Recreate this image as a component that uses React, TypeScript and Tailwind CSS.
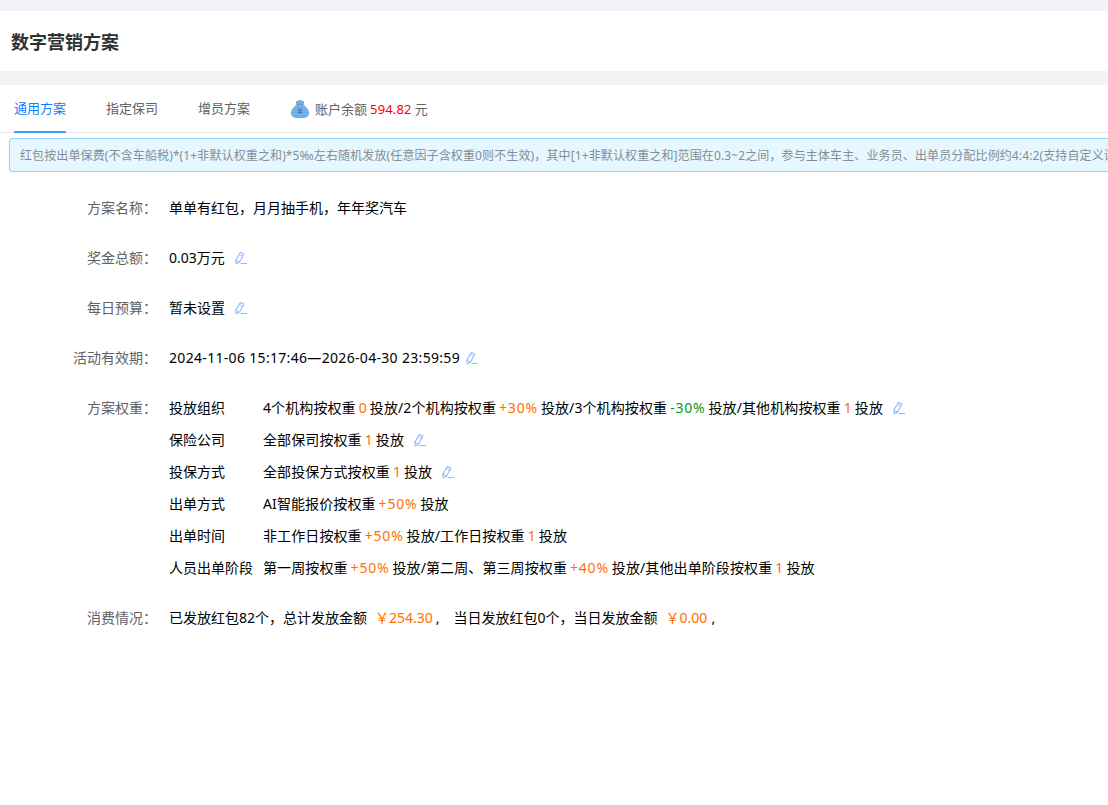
import { ReactNode } from "react";

const tabs = ["通用方案", "指定保司", "增员方案"];

const EditIcon = ({ className = "ml-[9px]" }) => (
  <button className={`${className} inline-flex cursor-pointer`}>
    <svg width="14" height="14" viewBox="0 0 14 14" fill="none" stroke="#8abaff" strokeWidth="1.1" strokeLinejoin="round">
      <path d="M6.300 1.400 9.900 3.100 5.600 10.900 2.200 12.700 1.800 9.200Z" />
      <path d="M5.200 3.400 8.700 5.200M1.900 9.200 5.400 11" strokeWidth=".9" />
      <path d="M6.500 12.500H13" />
    </svg>
  </button>
);

const MoneyBag = () => (
  <svg width="20" height="20" viewBox="0 0 20 20">
    <path
      d="M6.200 2.800c.8-.8 1.800-.3 2.500-.9.900-.5 1.700-.5 2.600 0 .7.600 1.700.1 2.500.900.3.900-.5 1.600-.6 2.600.1 1.300 5.300 3.600 5.300 9 0 3.100-2.500 4.200-8.500 4.200s-8.500-1.100-8.500-4.200c0-5.400 5.200-7.700 5.300-9-.1-1-.9-1.700-.6-2.600Z"
      fill="#6bb3f8"
      stroke="#7d95aa"
      strokeWidth=".9"
    />
    <path d="M6.900 5.500h6.200" stroke="#6391bd" strokeWidth=".8" />
    <path d="m7.800 9 2.200 2 2.200-2M10 11v4M7.400 11.500h5.200M7.400 13.400h5.200" fill="none" stroke="#56718b" strokeWidth=".9" />
  </svg>
);

const Weight = ({ children, color = "text-[#ff6f00]" }: { children: ReactNode; color?: string }) => (
  <span className={`${color} mx-[3px]`}>{children}</span>
);

const Percent = ({ children, color = "text-[#ff6f00]" }: { children: ReactNode; color?: string }) => (
  <span className={`${color} mx-[3px] tracking-[0.8px]`}>{children}</span>
);

const Row = ({ label, children }: { label: string; children: ReactNode }) => (
  <div className="flex leading-8 mb-[18px]">
    <div className="w-[157px] shrink-0 text-right text-[#606266]">{label}：</div>
    <div className="pl-3">{children}</div>
  </div>
);

const WeightRow = ({ name, children }: { name: string; children: ReactNode }) => (
  <div className="flex h-8 items-center whitespace-nowrap">
    <div className="w-[94px] shrink-0">{name}</div>
    <div className="flex items-center tracking-[0.1px]">{children}</div>
  </div>
);

export default function App() {
  return (
    <div className="h-[805px] overflow-hidden bg-white text-sm text-black font-['Noto_Sans','Noto_Sans_CJK_SC',sans-serif]">
      <div className="h-[11px] bg-[#f0f2f5]" />
      <header className="h-[60px] flex items-center pl-[11px] pt-0.5">
        <h1 className="text-lg font-bold text-[#303133]">数字营销方案</h1>
      </header>
      <div className="h-[14px] bg-[#f0f2f5]" />

      <nav className="h-12 flex pl-[14px] gap-10 text-[13px] text-[#606266] border-b border-[#e4e7ed]">
        {tabs.map((tab, i) => (
          <button
            key={tab}
            className={i === 0 ? "h-12 pt-px text-[#1080ff] border-b-2 border-[#409eff]" : "h-12 pt-px border-b-2 border-transparent"}
          >
            {tab}
          </button>
        ))}
        <div className="flex items-center h-12">
          <MoneyBag />
          <span className="ml-[5px]">账户余额</span>
          <span className="mx-[3px] tracking-[0.15px] text-[#ff0000]">594.82</span>
          <span>元</span>
        </div>
      </nav>

      <div className="mt-[5px] ml-[9px] h-[34px] flex items-center pl-[10px] pt-0.5 border border-r-0 border-[#91d5ff] bg-[#e6f7ff] rounded-l text-xs tracking-[0.12px] text-[#858d94] whitespace-nowrap overflow-hidden">
        红包按出单保费(不含车船税)*(1+非默认权重之和)*5‰左右随机发放(任意因子含权重0则不生效)，其中[1+非默认权重之和]范围在0.3~2之间，参与主体车主、业务员、出单员分配比例约4:4:2(支持自定义设
      </div>

      <main className="pt-5">
        <Row label="方案名称">单单有红包，月月抽手机，年年奖汽车</Row>
        <Row label="奖金总额">
          <div className="flex items-center">0.03万元<EditIcon /></div>
        </Row>
        <Row label="每日预算">
          <div className="flex items-center">暂未设置<EditIcon /></div>
        </Row>
        <Row label="活动有效期">
          <div className="flex items-center">
            <span className="tracking-[0.32px]">2024-11-06 15:17:46—2026-04-30 23:59:59</span>
            <EditIcon className="ml-[5px]" />
          </div>
        </Row>
        <Row label="方案权重">
          <WeightRow name="投放组织">
            4个机构按权重<Weight>0</Weight>投放/2个机构按权重<Percent>+30%</Percent>投放/3个机构按权重
            <Percent color="text-[#009925]">-30%</Percent>投放/其他机构按权重<Weight>1</Weight>投放
            <EditIcon />
          </WeightRow>
          <WeightRow name="保险公司">
            全部保司按权重<Weight>1</Weight>投放<EditIcon />
          </WeightRow>
          <WeightRow name="投保方式">
            全部投保方式按权重<Weight>1</Weight>投放<EditIcon />
          </WeightRow>
          <WeightRow name="出单方式">
            AI智能报价按权重<Percent>+50%</Percent>投放
          </WeightRow>
          <WeightRow name="出单时间">
            非工作日按权重<Percent>+50%</Percent>投放/工作日按权重<Weight>1</Weight>投放
          </WeightRow>
          <WeightRow name="人员出单阶段">
            第一周按权重<Percent>+50%</Percent>投放/第二周、第三周按权重<Percent>+40%</Percent>投放/其他出单阶段按权重<Weight>1</Weight>投放
          </WeightRow>
        </Row>
        <Row label="消费情况">
          <div className="flex whitespace-nowrap">
            <span>已发放红包82个，总计发放金额</span>
            <span className="ml-2 mr-[3px] text-[#ff6f00]">￥254.30</span>
            <span>,</span>
            <span className="ml-[14px]">当日发放红包0个，当日发放金额</span>
            <span className="ml-2 mr-1 text-[#ff6f00]">￥0.00</span>
            <span>,</span>
          </div>
        </Row>
      </main>
    </div>
  );
}
